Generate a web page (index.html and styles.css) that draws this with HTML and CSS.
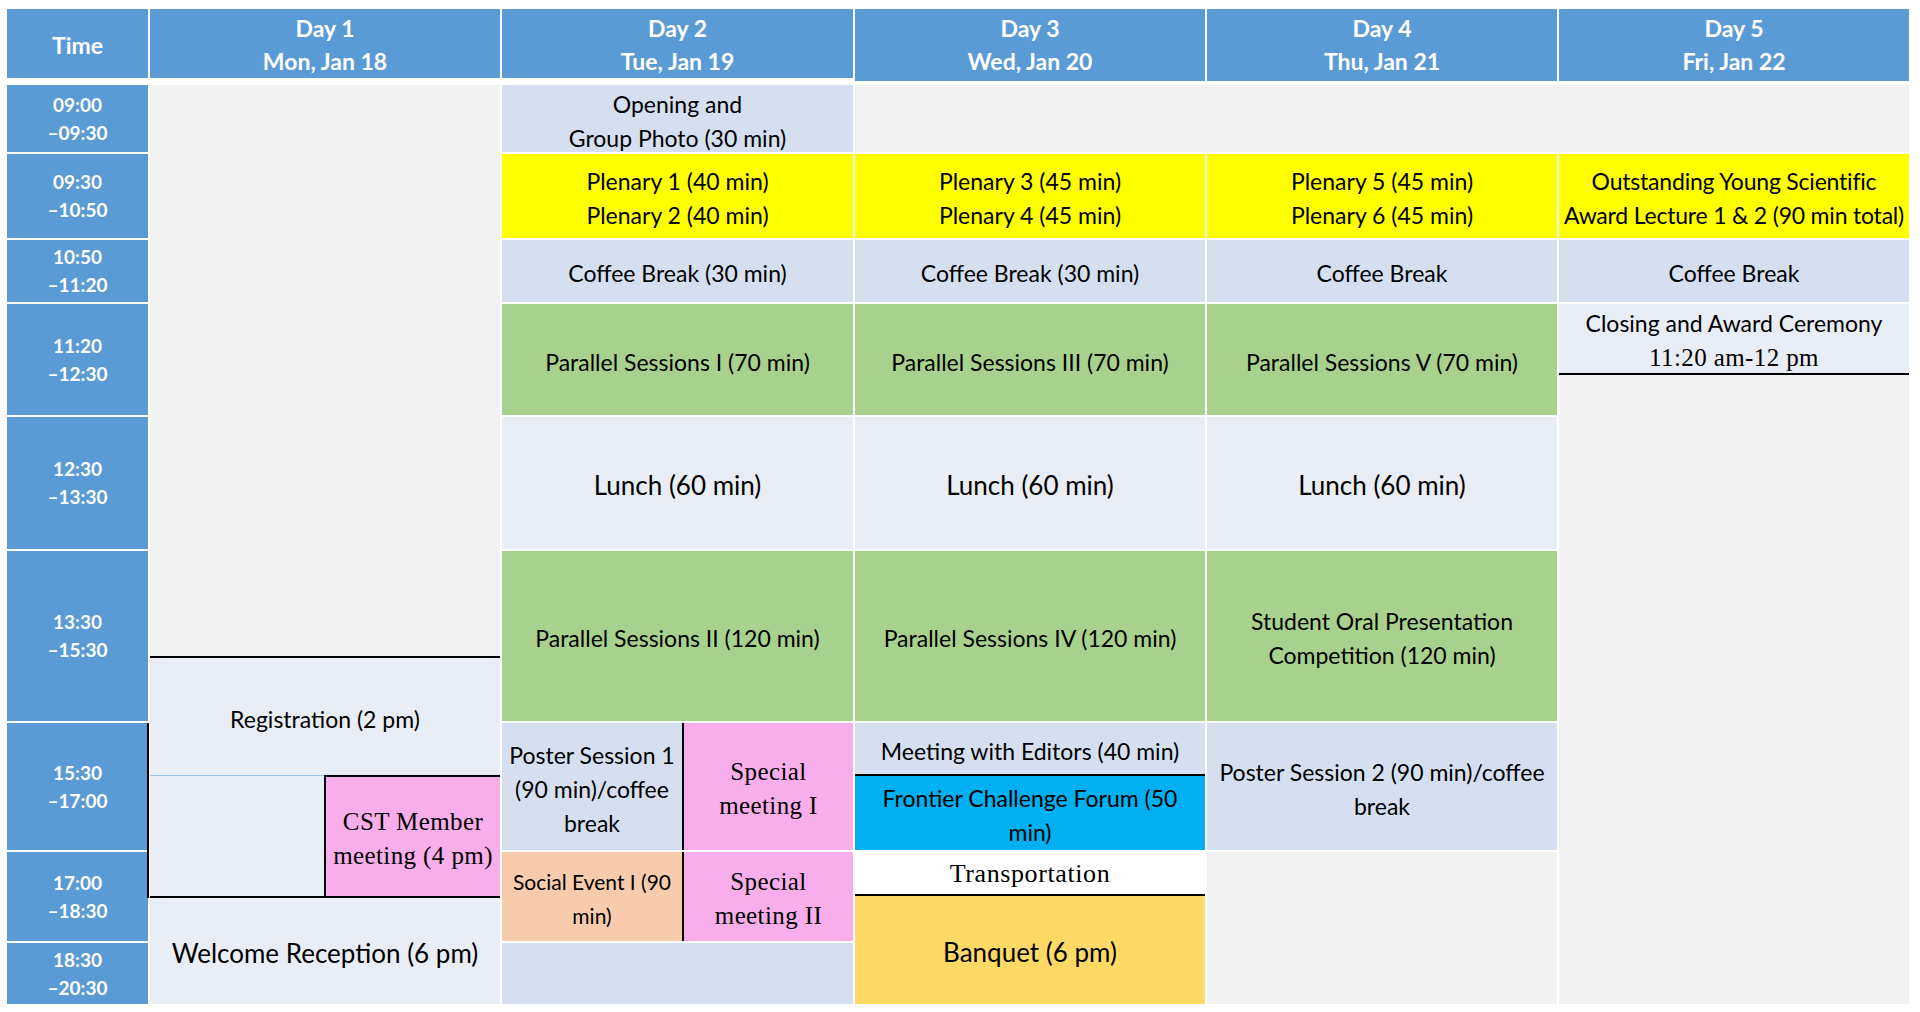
FILE: index.html
```html
<!DOCTYPE html>
<html lang="en">
<head>
<meta charset="utf-8">
<title>Conference Schedule</title>
<link rel="stylesheet" href="styles.css">
</head>
<body>
<div class="grid head">
  <div class="hc">Time</div>
  <div class="hc">Day 1<br>Mon, Jan 18</div>
  <div class="hc">Day 2<br>Tue, Jan 19</div>
  <div class="hc ext">Day 3<br>Wed, Jan 20</div>
  <div class="hc ext">Day 4<br>Thu, Jan 21</div>
  <div class="hc ext">Day 5<br>Fri, Jan 22</div>
</div>
<div class="grid body">
  <div class="tm r1">09:00<br>–09:30</div>
  <div class="tm r2">09:30<br>–10:50</div>
  <div class="tm r3">10:50<br>–11:20</div>
  <div class="tm r4">11:20<br>–12:30</div>
  <div class="tm r5">12:30<br>–13:30</div>
  <div class="tm r6">13:30<br>–15:30</div>
  <div class="tm r7">15:30<br>–17:00</div>
  <div class="tm r8">17:00<br>–18:30</div>
  <div class="tm r9">18:30<br>–20:30</div>

  <div class="day1">
    <div class="d1-gray"></div>
    <div class="cell d1-reg lav">Registration (2 pm)</div>
    <div class="d1-low">
      <div class="d1-empty lav"></div>
      <div class="cell d1-cst pink serif">CST Member<br>meeting (4 pm)</div>
    </div>
    <div class="cell d1-welcome lav big">Welcome Reception (6 pm)</div>
    <div class="d1-vline"></div>
  </div>

  <div class="cell c3 r1 lb">Opening and<br>Group Photo (30 min)</div>
  <div class="cell c3 r2 yellow">Plenary 1 (40 min)<br>Plenary 2 (40 min)</div>
  <div class="cell c3 r3 lb">Coffee Break (30 min)</div>
  <div class="cell c3 r4 green">Parallel Sessions I (70 min)</div>
  <div class="cell c3 r5 lav big">Lunch (60 min)</div>
  <div class="cell c3 r6 green">Parallel Sessions II (120 min)</div>
  <div class="split c3 r7">
    <div class="cell lb">Poster Session 1<br>(90 min)/coffee<br>break</div>
    <div class="cell special pink serif">Special<br>meeting I</div>
  </div>
  <div class="split c3 r8">
    <div class="cell peach small">Social Event I (90<br>min)</div>
    <div class="cell special pink serif">Special<br>meeting II</div>
  </div>
  <div class="c3 r9 lb"></div>

  <div class="top-gray"></div>
  <div class="cell c4 r2 yellow">Plenary 3 (45 min)<br>Plenary 4 (45 min)</div>
  <div class="cell c4 r3 lb">Coffee Break (30 min)</div>
  <div class="cell c4 r4 green">Parallel Sessions III (70 min)</div>
  <div class="cell c4 r5 lav big">Lunch (60 min)</div>
  <div class="cell c4 r6 green">Parallel Sessions IV (120 min)</div>
  <div class="day3-low">
    <div class="cell d3-meet lb">Meeting with Editors (40 min)</div>
    <div class="cell d3-forum cyan">Frontier Challenge Forum (50<br>min)</div>
    <div class="cell d3-trans serif">Transportation</div>
    <div class="cell d3-banquet gold big">Banquet (6 pm)</div>
  </div>

  <div class="cell c5 r2 yellow">Plenary 5 (45 min)<br>Plenary 6 (45 min)</div>
  <div class="cell c5 r3 lb">Coffee Break</div>
  <div class="cell c5 r4 green">Parallel Sessions V (70 min)</div>
  <div class="cell c5 r5 lav big">Lunch (60 min)</div>
  <div class="cell c5 r6 green">Student Oral Presentation<br>Competition (120 min)</div>
  <div class="cell c5 r7 lb">Poster Session 2 (90 min)/coffee<br>break</div>
  <div class="c5 r89 gray"></div>

  <div class="cell c6 r2 yellow tight">Outstanding Young Scientific<br>Award Lecture 1 &amp; 2 (90 min total)</div>
  <div class="cell c6 r3 lb">Coffee Break</div>
  <div class="day5-low">
    <div class="cell d5-close lav"><div>Closing and Award Ceremony<br><span class="serif">11:20 am-12 pm</span></div></div>
    <div class="d5-gray"></div>
  </div>
</div>
</body>
</html>
```
FILE: styles.css
```css
body {
  margin: 0;
  padding: 9px 0 0 7px;
  background: #ffffff;
  font-family: Lato, "Open Sans", sans-serif;
  color: #000000;
}

.grid {
  display: grid;
  grid-template-columns: 141px 350px 351px 350px 350px 350px;
  column-gap: 2px;
}

.head {
  height: 69px;
  grid-template-rows: 69px;
  margin-bottom: 7px;
}

.hc {
  background: #5b9bd5;
  color: #ffffff;
  font-weight: 700;
  font-size: 23px;
  line-height: 33px;
  padding-top: 3px;
  box-sizing: border-box;
  display: flex;
  align-items: center;
  justify-content: center;
  text-align: center;
}

.hc.ext {
  margin-bottom: -3px;
  padding-top: 0;
}

.body {
  grid-template-rows: 67px 84px 62px 111px 132px 170px 127px 89px 61px;
  row-gap: 2px;
}

.cell {
  display: flex;
  align-items: center;
  justify-content: center;
  text-align: center;
  font-size: 23px;
  line-height: 34px;
  padding-top: 4px;
  box-sizing: border-box;
}

.tm {
  grid-column: 1;
  background: #5b9bd5;
  color: #ffffff;
  font-weight: 700;
  font-size: 19px;
  line-height: 28px;
  display: flex;
  align-items: center;
  justify-content: center;
  text-align: center;
}

.r1 { grid-row: 1; }
.r2 { grid-row: 2; }
.r3 { grid-row: 3; }
.r4 { grid-row: 4; }
.r5 { grid-row: 5; }
.r6 { grid-row: 6; }
.r7 { grid-row: 7; }
.r8 { grid-row: 8; }
.r9 { grid-row: 9; }
.r89 { grid-row: 8 / 10; }

.c3 { grid-column: 3; }
.c4 { grid-column: 4; }
.c5 { grid-column: 5; }
.c6 { grid-column: 6; }

.gray { background: #f2f2f2; }
.lb { background: #d5dff0; }
.lav { background: #e9edf5; }
.green { background: #a9d18e; }
.yellow { background: #ffff00; }
.cyan { background: #00b0f0; }
.gold { background: #ffd966; }
.peach { background: #f8cbad; }
.pink { background: #f9aeec; }

.big { font-size: 26px; }
.small { font-size: 21px; }
.tight { letter-spacing: -0.2px; white-space: nowrap; }

.serif {
  font-family: "Liberation Serif", "Times New Roman", serif;
  font-size: 25px;
  letter-spacing: 0.4px;
}

/* Day 1 */
.day1 {
  grid-column: 2;
  grid-row: 1 / 10;
  display: flex;
  flex-direction: column;
  position: relative;
}

.d1-gray {
  height: 571px;
  background: #f2f2f2;
}

.d1-reg {
  height: 119px;
  border-top: 2px solid #000;
}

.d1-low {
  height: 121px;
  display: flex;
}

.d1-empty {
  width: 174px;
  border-top: 1px solid #9dc3e6;
}

.d1-cst {
  flex: 1;
  border-top: 2px solid #000;
  border-left: 2px solid #000;
}

.d1-welcome {
  height: 108px;
  border-top: 2px solid #000;
}

.d1-vline {
  position: absolute;
  left: -3px;
  top: 638px;
  width: 2px;
  height: 175px;
  background: #000;
}

/* Day 2 splits */
.split {
  display: grid;
  grid-template-columns: 180px 1fr;
}

.special {
  border-left: 2px solid #000;
}

/* merged top-row gray for days 3-5 */
.top-gray {
  grid-column: 4 / 7;
  grid-row: 1;
  background: #f2f2f2;
}

/* Day 3 lower */
.day3-low {
  grid-column: 4;
  grid-row: 7 / 10;
  display: flex;
  flex-direction: column;
}

.d3-meet { height: 51px; }

.d3-forum {
  height: 76px;
  border-top: 2px solid #000;
}

.d3-trans {
  height: 44px;
  background: #ffffff;
  font-size: 26px;
  letter-spacing: 0.6px;
}

.d3-banquet {
  height: 110px;
  border-top: 2px solid #000;
}

/* Day 5 lower */
.day5-low {
  grid-column: 6;
  grid-row: 4 / 10;
  display: flex;
  flex-direction: column;
}

.d5-close {
  height: 69px;
}

.d5-gray {
  flex: 1;
  background: #f2f2f2;
  border-top: 2px solid #000;
}
```
